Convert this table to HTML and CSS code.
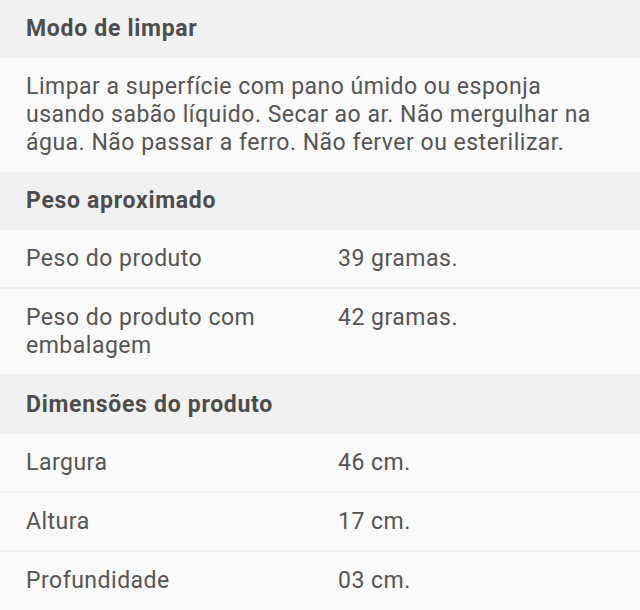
FILE: index.html
```html
<!DOCTYPE html>
<html lang="pt">
<head>
<meta charset="utf-8">
<link rel="stylesheet" href="styles.css">
</head>
<body>
<div class="spec">
  <div class="head">Modo de limpar</div>
  <div class="para">Limpar a superfície com pano úmido ou esponja usando sabão líquido. Secar ao ar. Não mergulhar na água. Não passar a ferro. Não ferver ou esterilizar.</div>
  <div class="head">Peso aproximado</div>
  <div class="row"><div class="key">Peso do produto</div><div class="val">39 gramas.</div></div>
  <div class="row"><div class="key">Peso do produto com embalagem</div><div class="val">42 gramas.</div></div>
  <div class="head">Dimensões do produto</div>
  <div class="row"><div class="key">Largura</div><div class="val">46 cm.</div></div>
  <div class="row"><div class="key">Altura</div><div class="val">17 cm.</div></div>
  <div class="row"><div class="key">Profundidade</div><div class="val">03 cm.</div></div>
</div>
</body>
</html>
```
FILE: styles.css
```css
html, body { margin: 0; padding: 0; background: #fafafa; }
body { font-family: Roboto, "Noto Sans", sans-serif; color: #555555; font-size: 23px; line-height: 28px; letter-spacing: 0.5px; }
.spec { display: flex; flex-direction: column; }
.head { background: #f1f1f1; font-weight: 700; color: #4d4d4d; padding: 15px 26px; letter-spacing: 0.7px; }
.para { padding: 15px 26px 15px 26px; background: #fafafa; }
.row { display: grid; grid-template-columns: 312px 1fr; padding: 15px 26px 14px; border-bottom: 2px solid #f0f0f0; }
.row:last-child { border-bottom: none; }
.key { padding-right: 20px; }
```
